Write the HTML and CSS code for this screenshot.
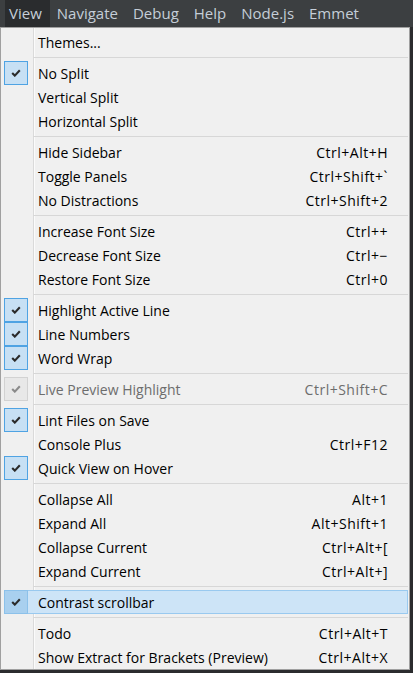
FILE: index.html
```html
<!DOCTYPE html>
<html>
<head>
<meta charset="utf-8">
<link rel="stylesheet" href="styles.css">
</head>
<body>
<div class="menubar">
  <span class="mb-item active">View</span>
  <span class="mb-item">Navigate</span>
  <span class="mb-item">Debug</span>
  <span class="mb-item">Help</span>
  <span class="mb-item">Node.js</span>
  <span class="mb-item">Emmet</span>
</div>
<div class="menu">
  <div class="row"><span class="gut"></span><span class="label">Themes...</span><span class="key"></span></div>
  <div class="sep"></div>
  <div class="row"><span class="gut"><span class="check"><svg width="10" height="8" viewBox="0 0 10 8"><path d="M1.2 4 L3.8 6.6 L8.8 1.2" /></svg></span></span><span class="label">No Split</span><span class="key"></span></div>
  <div class="row"><span class="gut"></span><span class="label">Vertical Split</span><span class="key"></span></div>
  <div class="row"><span class="gut"></span><span class="label">Horizontal Split</span><span class="key"></span></div>
  <div class="sep"></div>
  <div class="row"><span class="gut"></span><span class="label">Hide Sidebar</span><span class="key">Ctrl+Alt+H</span></div>
  <div class="row"><span class="gut"></span><span class="label">Toggle Panels</span><span class="key">Ctrl+Shift+`</span></div>
  <div class="row"><span class="gut"></span><span class="label">No Distractions</span><span class="key">Ctrl+Shift+2</span></div>
  <div class="sep"></div>
  <div class="row"><span class="gut"></span><span class="label">Increase Font Size</span><span class="key">Ctrl++</span></div>
  <div class="row"><span class="gut"></span><span class="label">Decrease Font Size</span><span class="key">Ctrl+−</span></div>
  <div class="row"><span class="gut"></span><span class="label">Restore Font Size</span><span class="key">Ctrl+0</span></div>
  <div class="sep"></div>
  <div class="row"><span class="gut"><span class="check"><svg width="10" height="8" viewBox="0 0 10 8"><path d="M1.2 4 L3.8 6.6 L8.8 1.2" /></svg></span></span><span class="label">Highlight Active Line</span><span class="key"></span></div>
  <div class="row"><span class="gut"><span class="check"><svg width="10" height="8" viewBox="0 0 10 8"><path d="M1.2 4 L3.8 6.6 L8.8 1.2" /></svg></span></span><span class="label">Line Numbers</span><span class="key"></span></div>
  <div class="row"><span class="gut"><span class="check"><svg width="10" height="8" viewBox="0 0 10 8"><path d="M1.2 4 L3.8 6.6 L8.8 1.2" /></svg></span></span><span class="label">Word Wrap</span><span class="key"></span></div>
  <div class="sep"></div>
  <div class="row disabled"><span class="gut"><span class="check"><svg width="10" height="8" viewBox="0 0 10 8"><path d="M1.2 4 L3.8 6.6 L8.8 1.2" /></svg></span></span><span class="label">Live Preview Highlight</span><span class="key">Ctrl+Shift+C</span></div>
  <div class="sep"></div>
  <div class="row"><span class="gut"><span class="check"><svg width="10" height="8" viewBox="0 0 10 8"><path d="M1.2 4 L3.8 6.6 L8.8 1.2" /></svg></span></span><span class="label">Lint Files on Save</span><span class="key"></span></div>
  <div class="row"><span class="gut"></span><span class="label">Console Plus</span><span class="key">Ctrl+F12</span></div>
  <div class="row"><span class="gut"><span class="check"><svg width="10" height="8" viewBox="0 0 10 8"><path d="M1.2 4 L3.8 6.6 L8.8 1.2" /></svg></span></span><span class="label">Quick View on Hover</span><span class="key"></span></div>
  <div class="sep"></div>
  <div class="row"><span class="gut"></span><span class="label">Collapse All</span><span class="key">Alt+1</span></div>
  <div class="row"><span class="gut"></span><span class="label">Expand All</span><span class="key">Alt+Shift+1</span></div>
  <div class="row"><span class="gut"></span><span class="label">Collapse Current</span><span class="key">Ctrl+Alt+[</span></div>
  <div class="row"><span class="gut"></span><span class="label">Expand Current</span><span class="key">Ctrl+Alt+]</span></div>
  <div class="sep"></div>
  <div class="row hover"><span class="gut"><span class="check"><svg width="10" height="8" viewBox="0 0 10 8"><path d="M1.2 4 L3.8 6.6 L8.8 1.2" /></svg></span></span><span class="label">Contrast scrollbar</span><span class="key"></span></div>
  <div class="sep"></div>
  <div class="row"><span class="gut"></span><span class="label">Todo</span><span class="key">Ctrl+Alt+T</span></div>
  <div class="row"><span class="gut"></span><span class="label">Show Extract for Brackets (Preview)</span><span class="key">Ctrl+Alt+X</span></div>
</div>
</body>
</html>
```
FILE: styles.css
```css
html, body {
  margin: 0;
  padding: 0;
}
body {
  width: 413px;
  height: 673px;
  overflow: hidden;
  background: #2b2c2e;
  font-family: "Open Sans", "Noto Sans", sans-serif;
  font-size: 14px;
}
.menubar {
  height: 27px;
  background: #3c3f41;
  display: flex;
  gap: 3px;
  padding-left: 5px;
}
.mb-item {
  color: #c5ced8;
  font-size: 15px;
  line-height: 27px;
  padding: 0 8px 0 4px;
}
.mb-item.active {
  background: #2a2c2e;
}
.menu {
  width: 410px;
  height: 643px;
  box-sizing: border-box;
  border: 1px solid #a0a0a0;
  padding: 2px 1px 0 3px;
  background:
    linear-gradient(to right, transparent 32px, #dadada 32px, #dadada 33px, #fbfbfb 33px, #fbfbfb 34px, transparent 34px),
    #f0f0f0;
  color: #000;
}
.row {
  display: flex;
  align-items: center;
  height: 24px;
  white-space: nowrap;
}
.gut {
  width: 24px;
  height: 24px;
  flex: none;
}
.check {
  display: flex;
  align-items: center;
  justify-content: center;
  width: 24px;
  height: 24px;
  box-sizing: border-box;
  border: 1px solid #4fa3e3;
  background: #c7e0f4;
}
.check svg path {
  fill: none;
  stroke: #2b2b2b;
  stroke-width: 2.1;
}
.label {
  flex: 1;
  padding-left: 10px;
}
.key {
  padding-right: 20px;
  letter-spacing: 0.5px;
}
.sep {
  height: 1px;
  margin: 3px 0 3px 29px;
  background: #d7d7d7;
}
.disabled {
  color: #6d6d6d;
}
.disabled .check {
  background: #e8e8e8;
  border-color: #d2d2d2;
}
.disabled .check svg path {
  stroke: #8a8a8a;
}
.hover {
  background: #cde4f7;
  box-shadow: inset 0 0 0 1px #99c9ef;
}
.hover .check {
  background: #a9d0ef;
  border-color: #8cc1ea;
}
```
